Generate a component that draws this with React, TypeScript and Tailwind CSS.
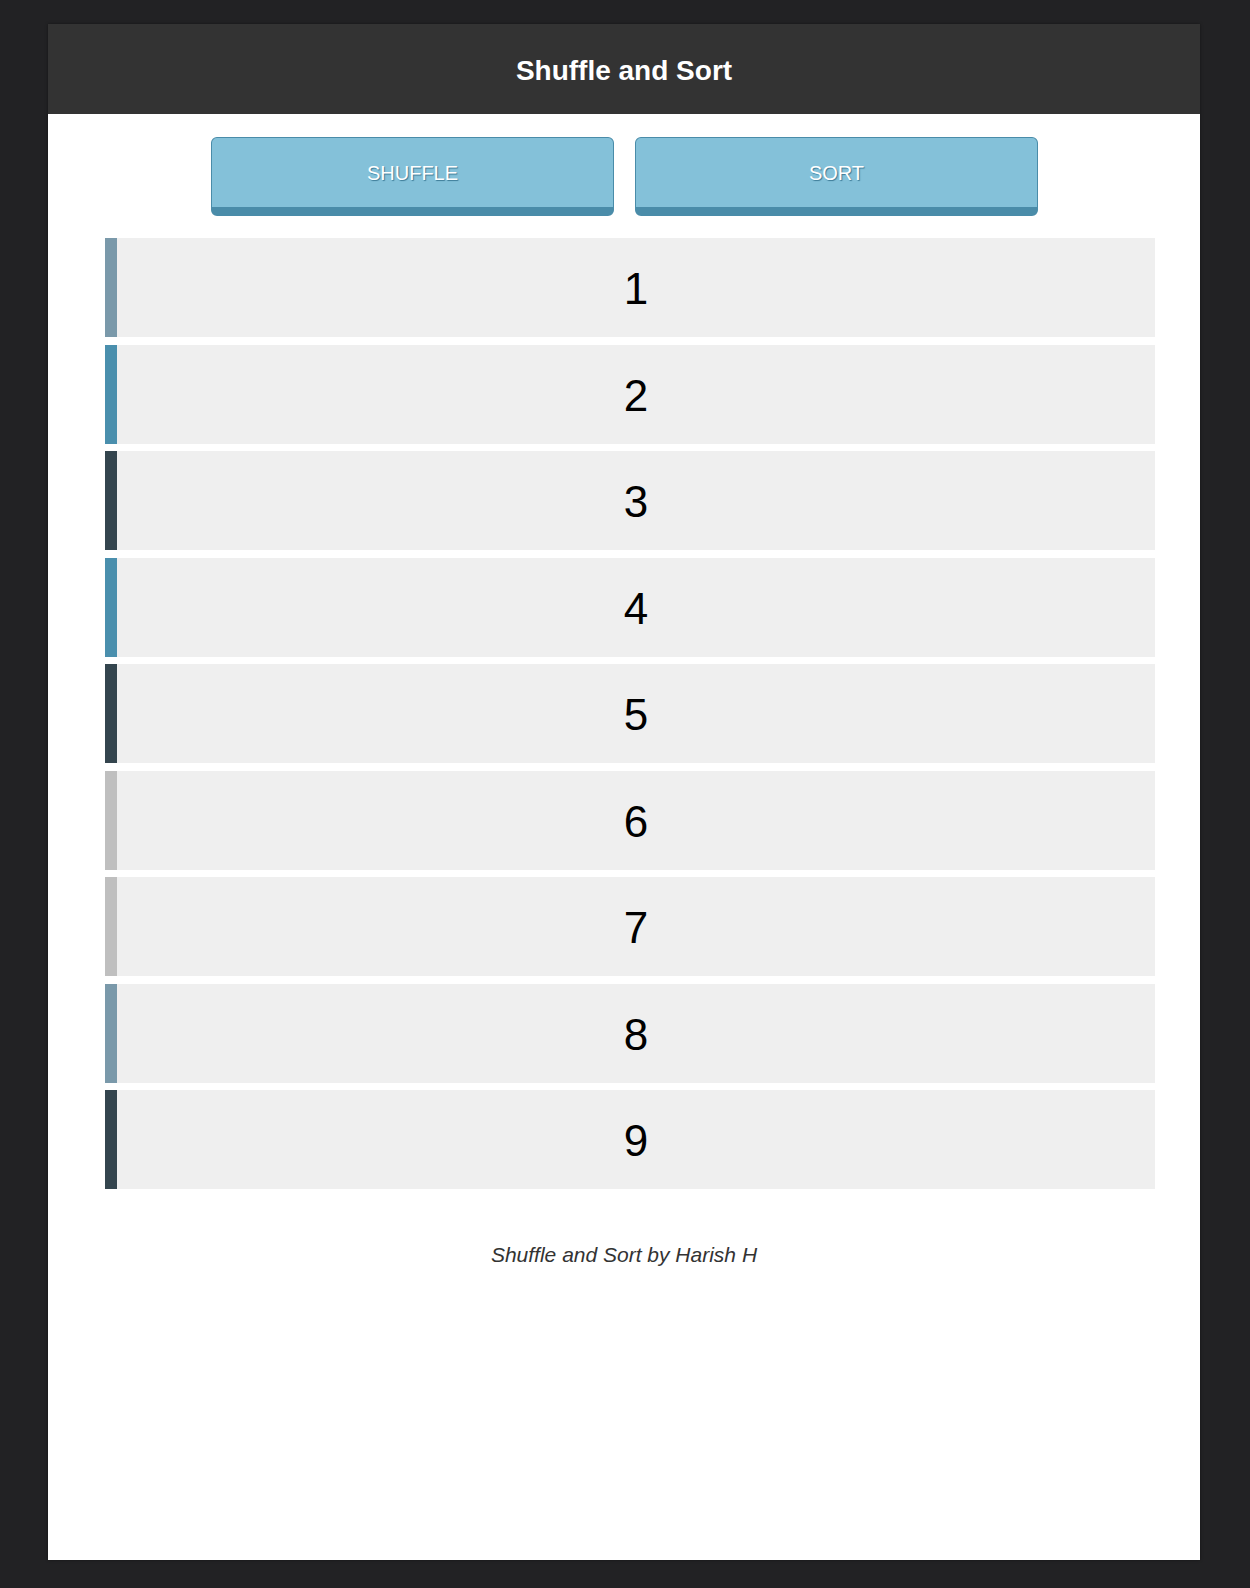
import React from "react";

const rows: { n: number; c: string }[] = [
  { n: 1, c: "#7a99aa" },
  { n: 2, c: "#4a8fad" },
  { n: 3, c: "#34454e" },
  { n: 4, c: "#4a8fad" },
  { n: 5, c: "#34454e" },
  { n: 6, c: "#bfbfbf" },
  { n: 7, c: "#bfbfbf" },
  { n: 8, c: "#7a99aa" },
  { n: 9, c: "#34454e" },
];

function Btn({ label }: { label: string }) {
  return (
    <button
      className="w-[403px] h-[79px] rounded-[6px] border border-[#4a8ca9] border-b-[9px] bg-[#84c1d9] text-white text-[20px] uppercase [text-shadow:1px_1px_1px_#3b7a96] cursor-pointer"
      style={{ fontFamily: '"Liberation Sans", Arial, sans-serif' }}
    >
      {label}
    </button>
  );
}

export default function App() {
  return (
    <div
      className="min-h-[1588px] bg-[#222224] pt-[24px] pb-[28px]"
      style={{ fontFamily: '"Liberation Sans", Arial, sans-serif' }}
    >
      <div className="w-[1152px] ml-[48px] h-[1536px] bg-white flex flex-col shadow-[0_0_3px_rgba(0,0,0,0.4)]">
        <div className="h-[90px] bg-[#333333] flex items-center justify-center pt-[4px]">
          <h1 className="text-white font-bold text-[28px] leading-none">Shuffle and Sort</h1>
        </div>
        <div className="flex justify-center gap-[21px] mt-[23px] ml-[1px]">
          <Btn label="Shuffle" />
          <Btn label="Sort" />
        </div>
        <div className="flex flex-col gap-[7.5px] mt-[22px] pl-[57px] pr-[45px]">
          {rows.map((r) => (
            <div
              key={r.n}
              className="h-[99px] bg-[#efefef] border-l-[12px] flex items-center justify-center text-black text-[44px] pt-[3px]"
              style={{ borderLeftColor: r.c }}
            >
              {r.n}
            </div>
          ))}
        </div>
        <div className="mt-[54px] text-center italic text-[21px] leading-[24px] text-[#333333]">
          Shuffle and Sort by Harish H
        </div>
      </div>
    </div>
  );
}
